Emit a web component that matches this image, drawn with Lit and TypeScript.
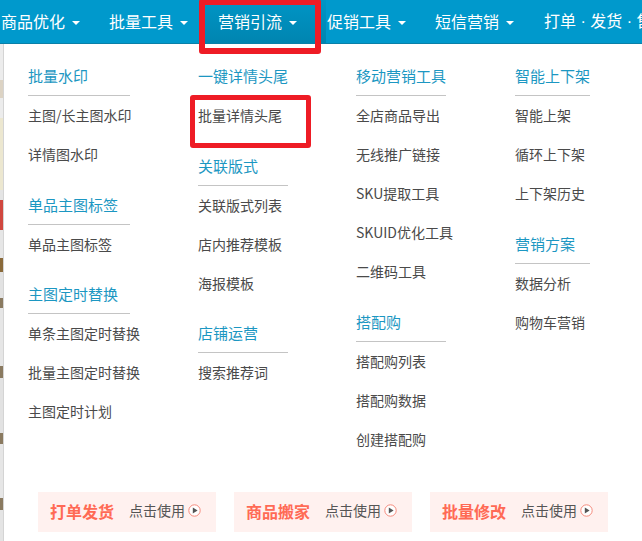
import { LitElement, html, css } from "lit";
import { customElement } from "lit/decorators.js";

type Group = { title: string; items: string[] };
type Column = { width: number; groups: Group[] };

const NAV = ["商品优化", "批量工具", "营销引流", "促销工具", "短信营销"];
const COLUMNS: Column[] = [
  { width: 102, groups: [
    { title: "批量水印", items: ["主图/长主图水印", "详情图水印"] },
    { title: "单品主图标签", items: ["单品主图标签"] },
    { title: "主图定时替换", items: ["单条主图定时替换", "批量主图定时替换", "主图定时计划"] },
  ]},
  { width: 90, groups: [
    { title: "一键详情头尾", items: ["批量详情头尾"] },
    { title: "关联版式", items: ["关联版式列表", "店内推荐模板", "海报模板"] },
    { title: "店铺运营", items: ["搜索推荐词"] },
  ]},
  { width: 90, groups: [
    { title: "移动营销工具", items: ["全店商品导出", "无线推广链接", "SKU提取工具", "SKUID优化工具", "二维码工具"] },
    { title: "搭配购", items: ["搭配购列表", "搭配购数据", "创建搭配购"] },
  ]},
  { width: 75, groups: [
    { title: "智能上下架", items: ["智能上架", "循环上下架", "上下架历史"] },
    { title: "营销方案", items: ["数据分析", "购物车营销"] },
  ]},
];
const PROMOS = ["打单发货", "商品搬家", "批量修改"];
const SEGS: [number, string][] = [
  [36, "#ececec"], [18, "#dcd3c4"], [20, "#ececec"], [72, "#ece7d0"], [10, "#e4e4e4"], [30, "#d0473f"],
  [28, "#e6e6e6"], [14, "#8a6a3a"], [26, "#e2e2e2"], [10, "#8a7a60"], [58, "#e6e6e6"],
  [12, "#8a7a60"], [55, "#e2e2e2"], [11, "#8a7a60"], [54, "#e6e6e6"], [12, "#8a7a60"], [31, "#e4e4e4"],
];

@customElement("app-root")
export class AppRoot extends LitElement {
  static styles = css`
    :host {
      display: block;
      width: 642px;
      height: 541px;
      position: relative;
      overflow: hidden;
      background: #fff;
      font-family: "Microsoft YaHei", "Noto Sans CJK SC", "Liberation Sans", sans-serif;
    }
    .nav {
      display: flex;
      height: 43px;
      background: #0099cc;
      border-bottom: 1px solid #0a80a8;
      color: #fff;
      font-size: 16px;
      line-height: 43px;
      white-space: nowrap;
      overflow: hidden;
      padding-left: 1px;
    }
    .nav-item {
      display: flex;
      align-items: center;
      gap: 7px;
      flex: none;
      width: 108px;
      box-sizing: border-box;
    }
    .nav-item:nth-child(2) { width: 109px; }
    .nav-item.active {
      background: linear-gradient(#0095c6, #0085b0);
      margin-left: -14px;
      padding-left: 14px;
      width: 122px;
      margin-right: -14px;
    }
    .nav-item.active + .nav-item { margin-left: 15px; }
    .caret {
      width: 0;
      height: 0;
      border-left: 4px solid transparent;
      border-right: 4px solid transparent;
      border-top: 4px solid #fff;
      margin-top: 2px;
    }
    .nav-last {
      margin-left: 1px;
      font-family: "Liberation Sans", "Noto Sans CJK SC", sans-serif;
    }
    .body {
      display: flex;
      height: 497px;
    }
    .strip {
      width: 4px;
      flex: none;
      display: flex;
      flex-direction: column;
      background: #e6e6e6;
      border-right: 1px solid #d4d4d4;
      box-sizing: border-box;
    }
    .seg { flex: none; }
    .panel {
      flex: 1;
      min-width: 0;
      display: flex;
      flex-direction: column;
    }
    .columns {
      display: flex;
      height: 448px;
      padding-left: 24px;
    }
    .col { flex: none; }
    .col:nth-child(1) { margin-right: 68px; }
    .col:nth-child(2) { margin-right: 68px; }
    .col:nth-child(3) { margin-right: 69px; }
    .group { margin-bottom: 11.5px; }
    .group:first-child { padding-top: 14px; }
    .head {
      height: 38px;
      line-height: 36px;
      font-size: 15px;
      color: #1c97c2;
      border-bottom: 1px solid #c4c4c4;
      box-sizing: border-box;
      white-space: nowrap;
      margin-bottom: 1px;
    }
    .item {
      height: 39px;
      line-height: 36px;
      font-size: 14px;
      color: #4a4a4a;
      white-space: nowrap;
    }
    .promos {
      display: flex;
      gap: 18px;
      padding-left: 34px;
    }
    .promo {
      width: 178px;
      height: 40px;
      box-sizing: border-box;
      padding: 0 0 3px 12px;
      display: flex;
      align-items: center;
      background: #fff1ef;
    }
    .promo-title {
      font-size: 16px;
      font-weight: 700;
      color: #ff6a55;
      margin: 1px 15px 0 0;
      white-space: nowrap;
    }
    .promo-use {
      font-size: 14px;
      color: #555;
      margin: 0 3px 1px 0;
      white-space: nowrap;
    }
    .promo svg { flex: none; display: block; }
    .mark {
      position: absolute;
      box-sizing: border-box;
      border: 5px solid #ee1c25;
      border-radius: 3px;
      pointer-events: none;
    }
    .mark.nav-mark { left: 199px; top: -1px; width: 122px; height: 55px; border-width: 6px; }
    .mark.item-mark { left: 190px; top: 95px; width: 121px; height: 53px; }
  `;

  render() {
    return html`
      <div class="nav">
        ${NAV.map(
          (n) => html`<div class="nav-item ${n === "营销引流" ? "active" : ""}">${n}<span class="caret"></span></div>`
        )}
        <div class="nav-last">打单 · 发货 · 售后</div>
      </div>
      <div class="body">
        <div class="strip">
          ${SEGS.map(
            ([h, c]) => html`<div class="seg" style="height:${h}px;background:${c}"></div>`
          )}
        </div>
        <div class="panel">
          <div class="columns">
            ${COLUMNS.map(
              (c) => html`<div class="col" style="width:${c.width}px">
                ${c.groups.map(
                  (g) => html`<div class="group">
                    <div class="head">${g.title}</div>
                    ${g.items.map((i) => html`<div class="item">${i}</div>`)}
                  </div>`
                )}
              </div>`
            )}
          </div>
          <div class="promos">
            ${PROMOS.map(
              (p) => html`<div class="promo">
                <span class="promo-title">${p}</span>
                <span class="promo-use">点击使用</span>
                <svg width="13" height="13" viewBox="0 0 13 13">
                  <circle cx="6.5" cy="6.5" r="5.7" fill="#fff" stroke="#f58a7c" stroke-width="1"></circle>
                  <path d="M4.8 3.4 L9.6 6.5 L4.8 9.6 Z" fill="#555"></path>
                </svg>
              </div>`
            )}
          </div>
        </div>
      </div>
      <div class="mark nav-mark"></div>
      <div class="mark item-mark"></div>
    `;
  }
}
